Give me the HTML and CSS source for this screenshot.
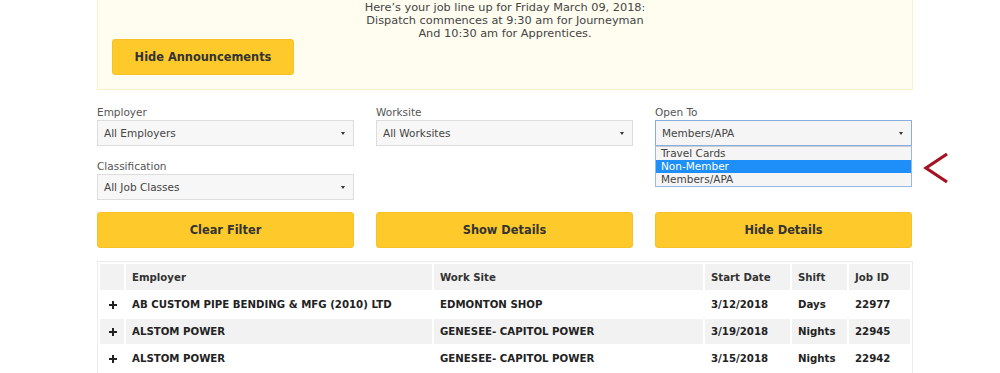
FILE: index.html
```html
<!DOCTYPE html>
<html lang="en">
<head>
<meta charset="utf-8"/>
<meta content="width=device-width, initial-scale=1.0" name="viewport"/>
<title>Job Line Up</title>
<link rel="stylesheet" href="styles.css">
</head>
<body>
<div class="wrap">
<div class="announce">
<p class="announce-text">Here’s your job line up for Friday March 09, 2018:<br/>Dispatch commences at 9:30 am for Journeyman<br/>And 10:30 am for Apprentices.</p>
<button class="btn btn-announce" type="button">Hide Announcements</button>
</div>

<div class="filters">
<div class="field">
<label>Employer</label>
<div class="select">All Employers<span class="caret"></span></div>
</div>
<div class="field">
<label>Worksite</label>
<div class="select">All Worksites<span class="caret"></span></div>
</div>
<div class="field">
<label>Open To</label>
<div class="select select-open">Members/APA<span class="caret"></span></div>
<ul class="options">
<li>Travel Cards</li>
<li class="active">Non-Member</li>
<li>Members/APA</li>
</ul>
<svg class="pointer" width="26" height="32" viewBox="0 0 26 32"><polyline points="24,2 3,16 24,30" fill="none" stroke="#a51221" stroke-width="3.2"/></svg>
</div>
<div class="field">
<label>Classification</label>
<div class="select">All Job Classes<span class="caret"></span></div>
</div>
</div>

<div class="actions">
<button class="btn" type="button">Clear Filter</button>
<button class="btn" type="button">Show Details</button>
<button class="btn" type="button">Hide Details</button>
</div>

<table class="jobs">
<colgroup>
<col style="width:24px"/><col style="width:306px"/><col style="width:269px"/><col style="width:85px"/><col style="width:55px"/><col style="width:61px"/>
</colgroup>
<thead>
<tr><th></th><th>Employer</th><th>Work Site</th><th>Start Date</th><th>Shift</th><th>Job ID</th></tr>
</thead>
<tbody>
<tr><td><span class="plus"></span></td><td>AB CUSTOM PIPE BENDING &amp; MFG (2010) LTD</td><td>EDMONTON SHOP</td><td>3/12/2018</td><td>Days</td><td>22977</td></tr>
<tr><td><span class="plus"></span></td><td>ALSTOM POWER</td><td>GENESEE- CAPITOL POWER</td><td>3/19/2018</td><td>Nights</td><td>22945</td></tr>
<tr><td><span class="plus"></span></td><td>ALSTOM POWER</td><td>GENESEE- CAPITOL POWER</td><td>3/15/2018</td><td>Nights</td><td>22942</td></tr>
</tbody>
</table>
</div>
</body>
</html>
```

FILE: styles.css
```css
/* job line up page */
body {
    margin: 0;
    font-family: "DejaVu Sans", Verdana, sans-serif;
    color: #333;
    background: #fff;
}

.wrap {
    width: 816px;
    margin-left: 97px;
}

.announce {
    background-color: #fffcf0;
    border: 1px solid #fcf0c8;
    border-top: none;
    padding: 0 14px 14px;
}

.announce-text {
    margin: 0;
    padding-top: 1px;
    text-align: center;
    font-size: 11.3px;
    line-height: 13px;
    color: #444;
}

.btn {
    display: block;
    height: 36px;
    background-color: #fec92a;
    border: 1px solid #f6c228;
    border-radius: 3px;
    font-family: "DejaVu Sans", Verdana, sans-serif;
    font-weight: bold;
    font-size: 11.4px;
    color: #333;
    cursor: pointer;
}

.btn-announce {
    width: 182px;
    margin-top: -1px;
}

.filters {
    display: grid;
    grid-template-columns: repeat(3, 257px);
    column-gap: 22px;
    row-gap: 14px;
    margin-top: 16px;
}

.field {
    position: relative;
}

.field label {
    display: block;
    font-size: 10.5px;
    line-height: 13px;
    color: #555;
    margin-bottom: 1px;
}

.select {
    position: relative;
    height: 26px;
    box-sizing: border-box;
    border: 1px solid #ddd;
    background-color: #f7f7f7;
    font-size: 10.5px;
    line-height: 24px;
    padding-left: 6px;
    color: #444;
}

.select-open {
    border-color: #88aee0;
    background-color: #f5f5f5;
}

.caret {
    position: absolute;
    right: 8px;
    top: 11px;
    border-left: 2px solid transparent;
    border-right: 2px solid transparent;
    border-top: 3px solid #333;
}

.options {
    position: absolute;
    left: 0;
    right: 0;
    top: 40px;
    margin: 0;
    padding: 0;
    list-style: none;
    background-color: #f5f5f5;
    border: 1px solid #9ab8e2;
    border-top-color: #ccc;
    font-size: 10.5px;
    line-height: 13px;
    color: #444;
}

.options li {
    padding-left: 5px;
}

.options li.active {
    background-color: #1e8ff9;
    color: #fff;
}

.pointer {
    position: absolute;
    left: 268px;
    top: 46px;
}

.actions {
    display: grid;
    grid-template-columns: repeat(3, 257px);
    column-gap: 22px;
    margin-top: 12px;
}

.actions .btn {
    width: 100%;
}

.jobs {
    width: 816px;
    margin-top: 13px;
    border: 1px solid #ebebeb;
    border-spacing: 2px;
    table-layout: fixed;
    font-size: 10.2px;
    font-weight: bold;
    color: #222;
}

.jobs th,
.jobs td {
    text-align: left;
    padding: 0 0 0 6px;
    height: 25px;
    white-space: nowrap;
    overflow: hidden;
}

.jobs th {
    height: 26px;
    background-color: #f2f2f2;
    color: #333;
}

.jobs tbody tr:nth-child(2) td {
    background-color: #f2f2f2;
}

.plus {
    position: relative;
    display: inline-block;
    width: 8px;
    height: 8px;
    margin-left: 3px;
    vertical-align: middle;
}

.plus::before,
.plus::after {
    content: "";
    position: absolute;
    background-color: #222;
}

.plus::before {
    left: 0;
    top: 3px;
    width: 8px;
    height: 2px;
}

.plus::after {
    left: 3px;
    top: 0;
    width: 2px;
    height: 8px;
}
```
